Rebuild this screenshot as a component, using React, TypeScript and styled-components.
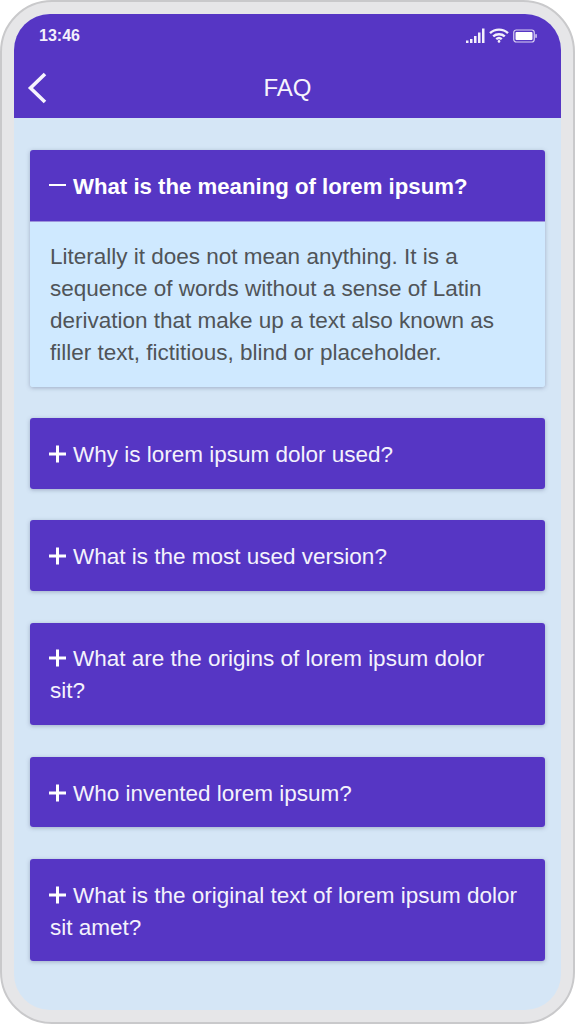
import React from 'react';
import styled, { createGlobalStyle } from 'styled-components';

const GlobalStyle = createGlobalStyle`
  html, body {
    margin: 0;
    padding: 0;
    background: #fff;
    font-family: "Liberation Sans", Arial, sans-serif;
  }
`;

const Phone = styled.div`
  box-sizing: border-box;
  width: 575px;
  height: 1024px;
  padding: 12px;
  background: #e6e6e8;
  border: 2px solid #c9c9cb;
  border-radius: 52px;
  overflow: hidden;
`;

const Screen = styled.div`
  height: 100%;
  background: #d5e6f6;
  border-radius: 36px;
  overflow: hidden;
`;

const Header = styled.header`
  height: 104px;
  background: #5636c4;
  color: #fff;
  display: flex;
  flex-direction: column;
`;

const StatusBar = styled.div`
  height: 43px;
  padding: 0 24px 0 25px;
  display: flex;
  align-items: center;
  justify-content: space-between;
`;

const Time = styled.span`
  font-size: 16px;
  font-weight: 700;
  color: #f3f0fb;
`;

const StatusIcons = styled.div`
  display: flex;
  align-items: center;
  gap: 4px;
`;

const NavBar = styled.div`
  flex: 1;
  display: flex;
  align-items: center;
  padding: 0 0 0 13px;
`;

const BackButton = styled.div`
  width: 20px;
  height: 32px;
  display: flex;
`;

const Title = styled.h1`
  flex: 1;
  margin: 0 33px 0 0;
  text-align: center;
  font-size: 24px;
  font-weight: 400;
  color: #f6f4fd;
`;

const List = styled.div`
  padding: 32px 16px 0;
  display: flex;
  flex-direction: column;
  gap: 31.7px;
`;

const Card = styled.div`
  border-radius: 3px;
  overflow: hidden;
  box-shadow: 0 1px 4px rgba(60, 70, 110, 0.35);
`;

const Question = styled.div<{ $open?: boolean }>`
  background: #5636c4;
  padding: 20.75px 20px 17.75px;
  font-size: ${({ $open }) => ($open ? '22.2px' : '22.5px')};
  line-height: 32px;
  font-weight: ${({ $open }) => ($open ? 700 : 400)};
  color: ${({ $open }) => ($open ? '#fff' : '#f4f2fc')};
`;

const Sign = styled.svg<{ $lift?: boolean }>`
  width: 17px;
  height: 18px;
  margin: 0 7px 0 -1px;
  vertical-align: ${({ $lift }) => ($lift ? '0' : '-1px')};
`;

const Answer = styled.div`
  background: #cfe9ff;
  border-top: 1px solid #9d93dc;
  padding: 19.5px 20px 17.5px;
  font-size: 22.5px;
  line-height: 32px;
  color: #505458;
`;

const SignalIcon = () => (
  <svg width="19" height="16" viewBox="0 0 19 16" fill="#f3f0fb">
    <rect x="0" y="12.5" width="2.5" height="2.5" />
    <rect x="4" y="11" width="2.5" height="4" />
    <rect x="8" y="8" width="2.5" height="7" />
    <rect x="12" y="4.5" width="2.5" height="10.5" />
    <rect x="16" y="0.5" width="2.5" height="14.5" />
  </svg>
);

const WifiIcon = () => (
  <svg width="20" height="15" viewBox="0 0 20 15" fill="none" stroke="#f3f0fb" strokeWidth="2.4">
    <path d="M1 5.2C6 .4 14 .4 19 5.2" />
    <path d="M4.2 8.4C7.4 5.5 12.6 5.5 15.8 8.4" />
    <path d="M7.2 11.2C8.8 9.8 11.2 9.8 12.8 11.2" />
    <circle cx="10" cy="13.4" r="1.3" fill="#f3f0fb" stroke="none" />
  </svg>
);

const BatteryIcon = () => (
  <svg width="24" height="14" viewBox="0 0 24 14">
    <rect x="0.75" y="1" width="20.5" height="12" rx="2.5" fill="none" stroke="#d8d0f2" strokeWidth="1.2" />
    <rect x="2.5" y="3" width="17" height="8" rx="1" fill="#fff" />
    <rect x="22.3" y="5" width="1.5" height="4" rx="0.7" fill="#d8d0f2" />
  </svg>
);

const BackIcon = () => (
  <svg width="20" height="32" viewBox="0 0 20 32" fill="none" stroke="#f6f4fd" strokeWidth="3.6">
    <path d="M18 2 L3.5 16 L18 30" />
  </svg>
);

const PlusIcon = () => (
  <Sign viewBox="0 0 17 18" stroke="#fff" strokeWidth="3">
    <path d="M0 9H17M8.5 0.5V17.5" />
  </Sign>
);

const MinusIcon = () => (
  <Sign $lift viewBox="0 0 17 18" stroke="#fff" strokeWidth="2.2">
    <path d="M0 9H17" />
  </Sign>
);

const questions = [
  'Why is lorem ipsum dolor used?',
  'What is the most used version?',
  'What are the origins of lorem ipsum dolor sit?',
  'Who invented lorem ipsum?',
  'What is the original text of lorem ipsum dolor sit amet?',
];

const App = () => {
  return (
    <>
      <GlobalStyle />
      <Phone>
        <Screen>
          <Header>
            <StatusBar>
              <Time>13:46</Time>
              <StatusIcons>
                <SignalIcon />
                <WifiIcon />
                <BatteryIcon />
              </StatusIcons>
            </StatusBar>
            <NavBar>
              <BackButton>
                <BackIcon />
              </BackButton>
              <Title>FAQ</Title>
            </NavBar>
          </Header>
          <List>
            <Card>
              <Question $open>
                <MinusIcon />
                What is the meaning of lorem ipsum?
              </Question>
              <Answer>
                Literally it does not mean anything. It is a sequence of words
                without a sense of Latin derivation that make up a text also
                known as filler text, fictitious, blind or placeholder.
              </Answer>
            </Card>
            {questions.map((q) => (
              <Card key={q}>
                <Question>
                  <PlusIcon />
                  {q}
                </Question>
              </Card>
            ))}
          </List>
        </Screen>
      </Phone>
    </>
  );
};

export default App;
